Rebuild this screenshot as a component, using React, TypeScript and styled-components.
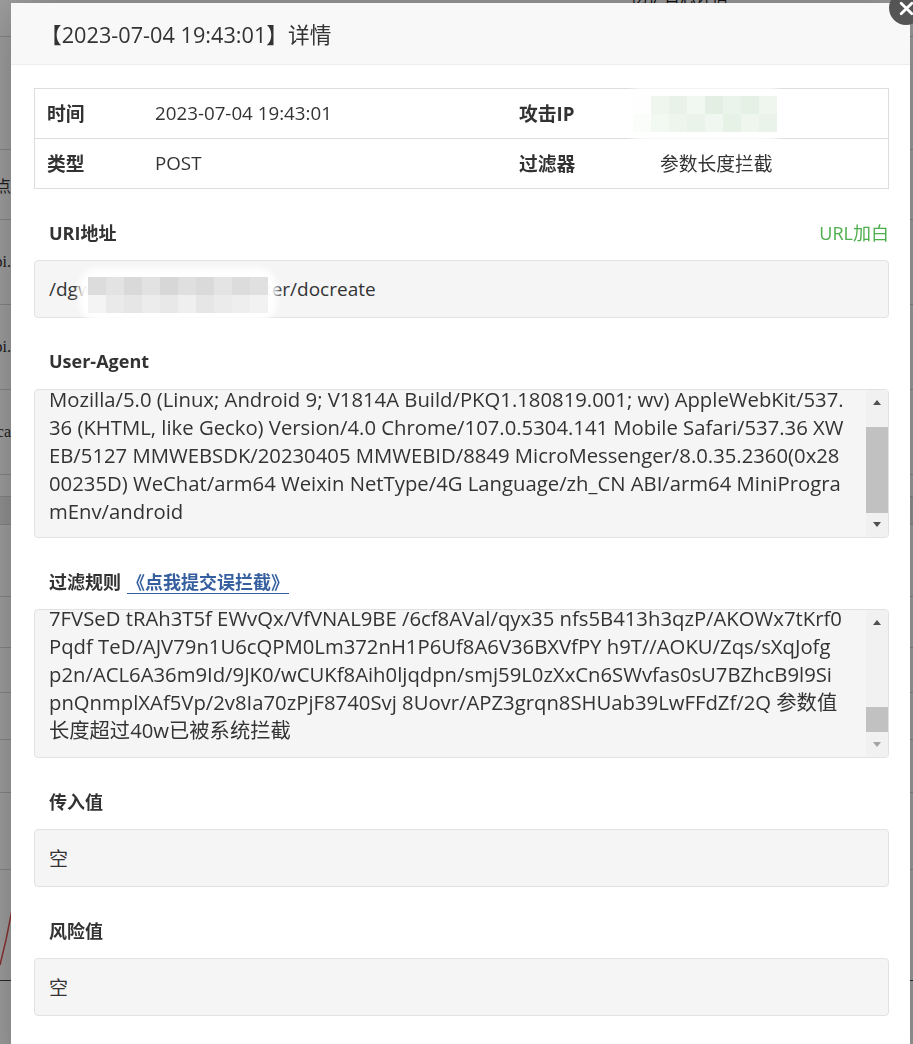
import React from "react";
import styled, { createGlobalStyle } from "styled-components";

const FONT = `"Open Sans", "Noto Sans CJK SC", sans-serif`;

const GlobalStyle = createGlobalStyle`
  html, body { margin: 0; padding: 0; }
  body {
    width: 913px;
    height: 1044px;
    overflow: hidden;
    background: #fff;
    font-family: ${FONT};
  }
`;

/* ---------- page behind the dialog ---------- */
const Page = styled.div`
  width: 913px;
  height: 1044px;
  background: #fff;
  display: flex;
  flex-direction: column;
`;

const PageTop = styled.div`
  height: 37px;
  flex: none;
  box-sizing: border-box;
  border-bottom: 1px solid #d6d6d6;
  padding-left: 632px;
  display: flex;
  align-items: flex-start;
  overflow: hidden;
`;

const PageTitle = styled.span`
  margin-top: -13px;
  font-size: 16px;
  line-height: 16px;
  color: #222;
  font-family: "Noto Sans CJK SC", sans-serif;
`;

const PageRow = styled.div<{ $h: number; $dark?: boolean }>`
  height: ${(p) => p.$h}px;
  flex: none;
  box-sizing: border-box;
  border-bottom: 1px solid #d6d6d6;
  background: ${(p) => (p.$dark ? "#ececec" : "#fff")};
  display: flex;
  align-items: center;
`;

const PageCell = styled.div`
  width: 11px;
  overflow: hidden;
  display: flex;
  justify-content: flex-end;
  white-space: nowrap;
  font-family: "Liberation Serif", "Noto Sans CJK SC", serif;
  font-size: 16px;
  color: #333;
`;

const ChartArea = styled.div`
  height: 110px;
  flex: none;
  border-bottom: 1px solid #444;
  display: flex;
`;

const Shade = styled.div`
  position: fixed;
  inset: 0;
  background: rgba(0, 0, 0, 0.37);
`;

/* ---------- dialog ---------- */
const Modal = styled.div`
  position: absolute;
  left: 11px;
  top: 3px;
  width: 899px;
  height: 1080px;
  background: #fff;
  box-shadow: 1px 1px 50px rgba(0, 0, 0, 0.3);
  font-family: ${FONT};
  color: #333;
`;

const Header = styled.div`
  height: 62px;
  box-sizing: border-box;
  background: #f8f8f8;
  border-bottom: 1px solid #eee;
  display: flex;
  align-items: center;
  padding-left: 29px;
  font-size: 21.7px;
  color: #333;
`;

const CloseButton = styled.button`
  position: absolute;
  left: 878px;
  top: -12px;
  width: 34px;
  height: 34px;
  padding: 0;
  border: none;
  border-radius: 50%;
  background: #555;
  display: flex;
  align-items: center;
  justify-content: center;
  cursor: pointer;
`;

const Body = styled.div`
  padding: 23px 21px 0 23px;
`;

const InfoTable = styled.div`
  position: relative;
  display: grid;
  grid-template-columns: 108px 364px 141px 1fr;
  border: 1px solid #ddd;
`;

const Cell = styled.div<{ $head?: boolean; $top?: boolean }>`
  box-sizing: border-box;
  height: ${(p) => (p.$top ? 50 : 49)}px;
  display: flex;
  align-items: center;
  padding: 0 0 3px 12px;
  font-size: 18.75px;
  font-weight: ${(p) => (p.$head ? 700 : 400)};
  color: #333;
  border-top: ${(p) => (p.$top ? "1px solid #ddd" : "none")};
`;

const Section = styled.section`
  margin-top: 29px;
`;

const SectionHead = styled.div`
  height: 28px;
  margin-bottom: 14px;
  padding-left: 15px;
  display: flex;
  align-items: center;
  justify-content: space-between;
`;

const Label = styled.span`
  font-size: 18px;
  font-weight: 700;
  color: #333;
`;

const ReportLink = styled.a`
  margin-left: 6px;
  font-size: 18px;
  font-weight: 700;
  color: #355f9e;
  text-decoration: underline;
  text-underline-offset: 4px;
`;

const WhiteListLink = styled.a`
  font-size: 18px;
  color: #4cae4c;
  text-decoration: none;
`;

const ValueBox = styled.div`
  position: relative;
  height: 58px;
  box-sizing: border-box;
  border: 1px solid #e2e2e2;
  border-radius: 4px;
  background: #f5f5f5;
  padding: 0 14px;
  display: flex;
  align-items: center;
  font-size: 19px;
  color: #333;
  white-space: nowrap;
`;

/* a read-only text area with its (classic) scroll bar */
const ScrollBox = styled.div`
  height: 149px;
  box-sizing: border-box;
  border: 1px solid #e2e2e2;
  border-radius: 4px;
  background: #f5f5f5;
  display: flex;
  overflow: hidden;
`;

const TextPane = styled.div`
  flex: 1;
  min-width: 0;
  overflow: hidden;
  padding-left: 14px;
  font-size: 20.3px;
  line-height: 28px;
  white-space: pre;
  color: #333;
`;

const TextLines = styled.div<{ $scrolled: number }>`
  margin-top: ${(p) => -p.$scrolled}px;
`;

const ScrollBar = styled.div`
  width: 22px;
  flex: none;
  display: flex;
  flex-direction: column;
  background: #f1f1f1;
`;

const ArrowButton = styled.div<{ $dir: "up" | "down" }>`
  height: 21px;
  flex: none;
  display: flex;
  justify-content: center;
  align-items: ${(p) => (p.$dir === "up" ? "flex-end" : "flex-start")};
  padding: ${(p) => (p.$dir === "up" ? "0 0 6px" : "6px 0 0")};
  box-sizing: border-box;
`;

const Arrow = styled.span<{ $dir: "up" | "down"; $color: string }>`
  width: 0;
  height: 0;
  border-left: 4.5px solid transparent;
  border-right: 4.5px solid transparent;
  ${(p) =>
    p.$dir === "up"
      ? `border-bottom: 5px solid ${p.$color};`
      : `border-top: 5px solid ${p.$color};`}
`;

const Track = styled.div`
  flex: 1;
  display: flex;
  flex-direction: column;
`;

const Thumb = styled.div<{ $offset: number; $size: number }>`
  margin-top: ${(p) => p.$offset}px;
  height: ${(p) => p.$size}px;
  background: #c1c1c1;
`;

/* mosaic (privacy blur) laid over content */
const Mosaic = styled.div<{ $x: number; $y: number; $cols: number; $cell: number }>`
  position: absolute;
  left: ${(p) => p.$x}px;
  top: ${(p) => p.$y}px;
  display: grid;
  grid-template-columns: repeat(${(p) => p.$cols}, ${(p) => p.$cell}px);
  grid-auto-rows: ${(p) => p.$cell}px;
  background: #fff;
  border-radius: 10px;
  box-shadow: 0 0 6px 9px rgba(255, 255, 255, 0.97);
`;

const Tile = styled.div<{ $c: string }>`
  background: ${(p) => p.$c};
`;

/* ---------- data ---------- */
const uaLines = [
  "Mozilla/5.0 (Linux; Android 9; V1814A Build/PKQ1.180819.001; wv) AppleWebKit/537.",
  "36 (KHTML, like Gecko) Version/4.0 Chrome/107.0.5304.141 Mobile Safari/537.36 XW",
  "EB/5127 MMWEBSDK/20230405 MMWEBID/8849 MicroMessenger/8.0.35.2360(0x28",
  "00235D) WeChat/arm64 Weixin NetType/4G Language/zh_CN ABI/arm64 MiniProgra",
  "mEnv/android",
];

const ruleLines = [
  "7FVSeD tRAh3T5f EWvQx/VfVNAL9BE /6cf8AVal/qyx35 nfs5B413h3qzP/AKOWx7tKrf0",
  "Pqdf TeD/AJV79n1U6cQPM0Lm372nH1P6Uf8A6V36BXVfPY h9T//AOKU/Zqs/sXqJofg",
  "p2n/ACL6A36m9Id/9JK0/wCUKf8Aih0ljqdpn/smj59L0zXxCn6SWvfas0sU7BZhcB9l9Si",
  "pnQnmplXAf5Vp/2v8Ia70zPjF8740Svj 8Uovr/APZ3grqn8SHUab39LwFFdZf/2Q 参数值",
  "长度超过40w已被系统拦截",
];

const ipTiles = [
  "#fdfefd", "#eef6ee", "#e8f2e8", "#f1f8f1", "#e4efe4", "#ebf4eb", "#e6f1e6", "#eef6ee",
  "#fbfdfb", "#f2f8f2", "#edf5ed", "#e9f3e9", "#f0f7f0", "#e7f2e7", "#eef6ee", "#e9f3e9",
];

const uriTiles = [
  "#dcdcdc", "#e3e3e3", "#d9d9d9", "#e2e2e2", "#d7d7d7", "#dfdfdf", "#dadada", "#e4e4e4", "#dcdcdc", "#e0e0e0",
  "#f4f4f4", "#eaeaea", "#e6e6e6", "#ececec", "#e8e8e8", "#efefef", "#e6e6e6", "#ebebeb", "#eeeeee", "#f2f2f2",
];

const pageRows: { h: number; text?: string; dark?: boolean }[] = [
  { h: 113 },
  { h: 70, text: "检测点" },
  { h: 85, text: "api." },
  { h: 85, text: "api." },
  { h: 85, text: "ca" },
  { h: 22 },
  { h: 28, dark: true },
  { h: 72 },
  { h: 51 },
  { h: 45 },
  { h: 47 },
  { h: 53 },
  { h: 77 },
];

type ScrollTextProps = {
  lines: string[];
  scrolled: number;
  thumbOffset: number;
  thumbSize: number;
  downColor: string;
};

function ScrollText({ lines, scrolled, thumbOffset, thumbSize, downColor }: ScrollTextProps) {
  return (
    <ScrollBox>
      <TextPane>
        <TextLines $scrolled={scrolled}>{lines.join("\n")}</TextLines>
      </TextPane>
      <ScrollBar>
        <ArrowButton $dir="up">
          <Arrow $dir="up" $color="#505050" />
        </ArrowButton>
        <Track>
          <Thumb $offset={thumbOffset} $size={thumbSize} />
        </Track>
        <ArrowButton $dir="down">
          <Arrow $dir="down" $color={downColor} />
        </ArrowButton>
      </ScrollBar>
    </ScrollBox>
  );
}

export default function App() {
  return (
    <>
      <GlobalStyle />
      <Page>
        <PageTop>
          <PageTitle>防护日志详情</PageTitle>
        </PageTop>
        {pageRows.map((r, i) => (
          <PageRow key={i} $h={r.h} $dark={r.dark}>
            {r.text && <PageCell>{r.text}</PageCell>}
          </PageRow>
        ))}
        <ChartArea>
          <svg width="40" height="110" viewBox="0 0 40 110">
            <polyline points="0,95 6,70 12,40 20,20" fill="none" stroke="#e05050" strokeWidth="1.5" />
          </svg>
        </ChartArea>
      </Page>
      <Shade />
      <Modal>
        <Header>【2023-07-04 19:43:01】详情</Header>
        <CloseButton aria-label="关闭">
          <svg width="15" height="15" viewBox="0 0 14 14">
            <path d="M2 2 L12 12 M12 2 L2 12" stroke="#fff" strokeWidth="2.6" strokeLinecap="round" />
          </svg>
        </CloseButton>
        <Body>
          <InfoTable>
            <Cell $head>时间</Cell>
            <Cell>2023-07-04 19:43:01</Cell>
            <Cell $head>攻击IP</Cell>
            <Cell></Cell>
            <Cell $head $top>类型</Cell>
            <Cell $top>POST</Cell>
            <Cell $head $top>过滤器</Cell>
            <Cell $top>参数长度拦截</Cell>
            <Mosaic $x={598} $y={7} $cols={8} $cell={18}>
              {ipTiles.map((c, i) => (
                <Tile key={i} $c={c} />
              ))}
            </Mosaic>
          </InfoTable>

          <Section>
            <SectionHead>
              <Label>URI地址</Label>
              <WhiteListLink href="#">URL加白</WhiteListLink>
            </SectionHead>
            <ValueBox>
              /dgwxxxxxxxxxxxxxxxxxxer/docreate
              <Mosaic $x={53} $y={16} $cols={10} $cell={18}>
                {uriTiles.map((c, i) => (
                  <Tile key={i} $c={c} />
                ))}
              </Mosaic>
            </ValueBox>
          </Section>

          <Section>
            <SectionHead>
              <Label>User-Agent</Label>
            </SectionHead>
            <ScrollText lines={uaLines} scrolled={5} thumbOffset={16} thumbSize={86} downColor="#505050" />
          </Section>

          <Section>
            <SectionHead>
              <span>
                <Label>过滤规则</Label>
                <ReportLink href="#">《点我提交误拦截》</ReportLink>
              </span>
            </SectionHead>
            <ScrollText lines={ruleLines} scrolled={6} thumbOffset={76} thumbSize={25} downColor="#a3a3a3" />
          </Section>

          <Section>
            <SectionHead>
              <Label>传入值</Label>
            </SectionHead>
            <ValueBox>空</ValueBox>
          </Section>

          <Section>
            <SectionHead>
              <Label>风险值</Label>
            </SectionHead>
            <ValueBox>空</ValueBox>
          </Section>
        </Body>
      </Modal>
    </>
  );
}
